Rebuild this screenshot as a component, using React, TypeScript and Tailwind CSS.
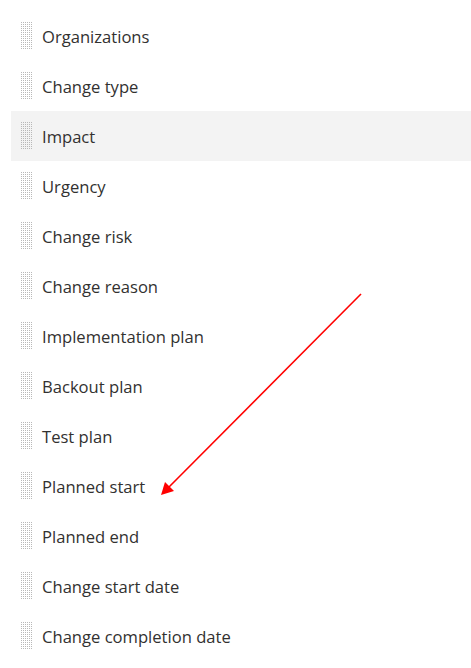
import React from "react";

const items = [
  "Organizations",
  "Change type",
  "Impact",
  "Urgency",
  "Change risk",
  "Change reason",
  "Implementation plan",
  "Backout plan",
  "Test plan",
  "Planned start",
  "Planned end",
  "Change start date",
  "Change completion date",
];

function Grip() {
  const dots: React.ReactNode[] = [];
  for (let r = 0; r < 14; r++) {
    for (let c = 0; c < 6; c++) {
      dots.push(<rect key={`${r}-${c}`} x={c * 2} y={r * 2} width="1" height="1" fill="#b8b8b8" />);
    }
  }
  return (
    <svg width="11" height="28" viewBox="0 0 11 28" className="shrink-0">
      {dots}
    </svg>
  );
}

export default function App() {
  return (
    <div className="relative w-[471px] h-[668px] overflow-hidden bg-white" style={{ fontFamily: '"Open Sans", "Noto Sans", sans-serif' }}>
      <div className="-mt-[39px]">
        {["", ...items].map((label, i) => (
          <div
            key={i}
            className={`ml-[11px] h-[50px] flex items-center gap-[10px] pl-[10px] ${label === "Impact" ? "bg-[#f3f3f3]" : ""}`}
          >
            <Grip />
            <span className="text-[16.6px] text-[#323130] leading-none pt-[2px]">{label}</span>
          </div>
        ))}
      </div>
      <svg className="absolute inset-0 pointer-events-none" width="471" height="668">
        <line x1="361" y1="294" x2="168" y2="488" stroke="#ff0000" strokeWidth="1.6" />
        <polygon points="161,495 165,482 174,491" fill="#ff0000" />
      </svg>
    </div>
  );
}
